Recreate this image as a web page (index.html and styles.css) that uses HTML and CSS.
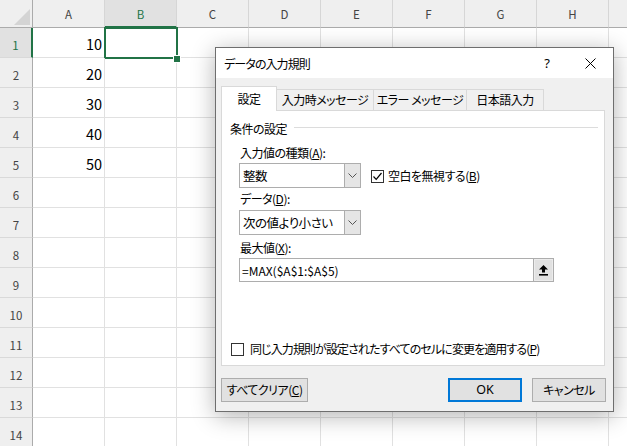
FILE: index.html
```html
<!DOCTYPE html>
<html lang="ja">
<head>
<meta charset="utf-8">
<title>データの入力規則</title>
<link rel="stylesheet" href="styles.css">
</head>
<body>
<div class="sheet">
  <div class="corner"><svg width="16" height="16" viewBox="0 0 16 16"><polygon points="0,16 16,0 16,16" fill="#d4d4d4"/></svg></div>
  <div class="hd">A</div><div class="hd sel">B</div><div class="hd">C</div><div class="hd">D</div><div class="hd">E</div><div class="hd">F</div><div class="hd">G</div><div class="hd">H</div><div class="hd last"></div>

  <div class="rh sel">1</div><div class="c num">10</div><div class="c active"><span class="selbox"></span><span class="handle"></span></div><div class="c"></div><div class="c"></div><div class="c"></div><div class="c"></div><div class="c"></div><div class="c"></div><div class="c last"></div>
  <div class="rh">2</div><div class="c num">20</div><div class="c"></div><div class="c"></div><div class="c"></div><div class="c"></div><div class="c"></div><div class="c"></div><div class="c"></div><div class="c last"></div>
  <div class="rh">3</div><div class="c num">30</div><div class="c"></div><div class="c"></div><div class="c"></div><div class="c"></div><div class="c"></div><div class="c"></div><div class="c"></div><div class="c last"></div>
  <div class="rh">4</div><div class="c num">40</div><div class="c"></div><div class="c"></div><div class="c"></div><div class="c"></div><div class="c"></div><div class="c"></div><div class="c"></div><div class="c last"></div>
  <div class="rh">5</div><div class="c num">50</div><div class="c"></div><div class="c"></div><div class="c"></div><div class="c"></div><div class="c"></div><div class="c"></div><div class="c"></div><div class="c last"></div>
  <div class="rh">6</div><div class="c"></div><div class="c"></div><div class="c"></div><div class="c"></div><div class="c"></div><div class="c"></div><div class="c"></div><div class="c"></div><div class="c last"></div>
  <div class="rh">7</div><div class="c"></div><div class="c"></div><div class="c"></div><div class="c"></div><div class="c"></div><div class="c"></div><div class="c"></div><div class="c"></div><div class="c last"></div>
  <div class="rh">8</div><div class="c"></div><div class="c"></div><div class="c"></div><div class="c"></div><div class="c"></div><div class="c"></div><div class="c"></div><div class="c"></div><div class="c last"></div>
  <div class="rh">9</div><div class="c"></div><div class="c"></div><div class="c"></div><div class="c"></div><div class="c"></div><div class="c"></div><div class="c"></div><div class="c"></div><div class="c last"></div>
  <div class="rh">10</div><div class="c"></div><div class="c"></div><div class="c"></div><div class="c"></div><div class="c"></div><div class="c"></div><div class="c"></div><div class="c"></div><div class="c last"></div>
  <div class="rh">11</div><div class="c"></div><div class="c"></div><div class="c"></div><div class="c"></div><div class="c"></div><div class="c"></div><div class="c"></div><div class="c"></div><div class="c last"></div>
  <div class="rh">12</div><div class="c"></div><div class="c"></div><div class="c"></div><div class="c"></div><div class="c"></div><div class="c"></div><div class="c"></div><div class="c"></div><div class="c last"></div>
  <div class="rh">13</div><div class="c"></div><div class="c"></div><div class="c"></div><div class="c"></div><div class="c"></div><div class="c"></div><div class="c"></div><div class="c"></div><div class="c last"></div>
  <div class="rh">14</div><div class="c"></div><div class="c"></div><div class="c"></div><div class="c"></div><div class="c"></div><div class="c"></div><div class="c"></div><div class="c"></div><div class="c last"></div>
</div>

<div class="dialog">
  <div class="titlebar">
    <span class="title">データの入力規則</span>
    <span class="help">?</span>
    <span class="close"><svg width="11" height="11" viewBox="0 0 11 11"><path d="M0.5 0.5 L10.5 10.5 M10.5 0.5 L0.5 10.5" stroke="#000" stroke-width="1" fill="none"/></svg></span>
  </div>
  <div class="dbody">
    <div class="tabs">
      <div class="tab active t1">設定</div>
      <div class="tab t2">入力時メッセージ</div>
      <div class="tab t3">エラー メッセージ</div>
      <div class="tab t4">日本語入力</div>
    </div>
    <div class="panel">
      <div class="group"><span class="glabel">条件の設定</span><span class="gline"></span></div>
      <div class="fields">
        <div class="label l1">入力値の種類(<u>A</u>):</div>
        <div class="row">
          <div class="combo"><span class="ctext">整数</span><span class="cbtn"><svg width="9" height="5" viewBox="0 0 9 5"><polyline points="0.5,0.5 4.5,4.5 8.5,0.5" fill="none" stroke="#555" stroke-width="1"/></svg></span></div>
          <div class="check cb1"><span class="box"><svg width="11" height="11" viewBox="0 0 11 11"><polyline points="1.5,5.5 4.2,8.3 9.5,2" fill="none" stroke="#000" stroke-width="1.2"/></svg></span><span>空白を無視する(<u>B</u>)</span></div>
        </div>
        <div class="label l2">データ(<u>D</u>):</div>
        <div class="combo"><span class="ctext">次の値より小さい</span><span class="cbtn"><svg width="9" height="5" viewBox="0 0 9 5"><polyline points="0.5,0.5 4.5,4.5 8.5,0.5" fill="none" stroke="#555" stroke-width="1"/></svg></span></div>
        <div class="label l3">最大値(<u>X</u>):</div>
        <div class="refedit"><span class="rtext">=MAX($A$1:$A$5)</span><span class="rbtn"><svg width="9" height="11" viewBox="0 0 9 11"><polygon points="4.5,0 9,4.5 6,4.5 6,7.5 3,7.5 3,4.5 0,4.5" fill="#000"/><rect x="0" y="9" width="9" height="1.6" fill="#000"/></svg></span></div>
      </div>
      <div class="check cb2"><span class="box"></span><span>同じ入力規則が設定されたすべてのセルに変更を適用する(<u>P</u>)</span></div>
    </div>
    <div class="buttons">
      <div class="btn clear">すべてクリア(<u>C</u>)</div>
      <div class="spacer"></div>
      <div class="btn ok">OK</div>
      <div class="btn cancel">キャンセル</div>
    </div>
  </div>
</div>
</body>
</html>
```

FILE: styles.css
```css
* { box-sizing: border-box; }
html, body { margin: 0; padding: 0; }
body {
  width: 627px;
  height: 446px;
  overflow: hidden;
  background: #fff;
  font-family: "Noto Sans CJK JP", "Noto Sans", sans-serif;
  position: relative;
}

/* spreadsheet */
.sheet {
  display: grid;
  grid-template-columns: 33px repeat(8, 72px) 1fr;
  grid-template-rows: 28px;
  grid-auto-rows: 30px;
}
.corner {
  background: #efefef;
  border-right: 1px solid #ababab;
  border-bottom: 1px solid #ababab;
  display: flex;
  align-items: flex-end;
  justify-content: flex-end;
  padding: 0 2px 2px 0;
}
.hd {
  background: #efefef;
  border-right: 1px solid #d6d6d6;
  border-bottom: 1px solid #ababab;
  font-size: 11.5px;
  color: #444;
  display: flex;
  align-items: center;
  justify-content: center;
  padding-top: 1px;
}
.hd.sel {
  background: #e1e1e1;
  color: #217346;
  border-bottom: 2px solid #217346;
}
.rh {
  background: #efefef;
  border-right: 1px solid #ababab;
  border-bottom: 1px solid #d9d9d9;
  font-size: 11.5px;
  color: #444;
  display: flex;
  align-items: center;
  justify-content: center;
  padding-top: 4px;
}
.rh.sel {
  background: #e1e1e1;
  color: #217346;
  border-right: 2px solid #217346;
}
.c {
  border-right: 1px solid #e1e1e1;
  border-bottom: 1px solid #e1e1e1;
  position: relative;
}
.c.last, .hd.last { border-right: none; }
.num {
  font-size: 14.5px;
  color: #000;
  display: flex;
  align-items: center;
  justify-content: flex-end;
  padding-right: 2px;
  padding-top: 1px;
}
.selbox {
  position: absolute;
  left: -1px;
  top: -1px;
  width: 74px;
  height: 32px;
  border: 2px solid #217346;
}
.handle {
  position: absolute;
  left: 68px;
  top: 27px;
  width: 8px;
  height: 8px;
  background: #217346;
  border: 1px solid #fff;
  z-index: 2;
}

/* dialog */
.dialog {
  position: absolute;
  left: 215px;
  top: 47px;
  width: 399px;
  height: 365px;
  border: 1px solid #6e6e6e;
  background: #f0f0f0;
  box-shadow: 0 4px 22px rgba(0, 0, 0, 0.3);
  display: flex;
  flex-direction: column;
  font-size: 12px;
  letter-spacing: -0.5px;
  font-feature-settings: "palt";
  color: #000;
  z-index: 3;
}
.titlebar {
  height: 30px;
  background: #fff;
  display: flex;
  align-items: center;
  padding-left: 8px;
  flex: none;
}
.title { font-size: 12px; letter-spacing: -0.9px; }
.help {
  margin-left: auto;
  margin-right: 5px;
  font-size: 13px;
  font-family: "Noto Sans", sans-serif;
  width: 20px;
  text-align: center;
  letter-spacing: 0;
}
.close {
  width: 46px;
  display: flex;
  justify-content: center;
  align-items: center;
  margin-left: 5px;
  margin-right: 0;
}
.close svg { display: block; }

.dbody {
  flex: 1;
  display: flex;
  flex-direction: column;
  padding: 8px 8px 9px 5px;
}
.tabs {
  display: flex;
  align-items: flex-end;
  height: 24px;
  position: relative;
  z-index: 1;
  flex: none;
}
.tab {
  height: 21px;
  border: 1px solid #d9d9d9;
  border-bottom: none;
  background: #f0f0f0;
  display: flex;
  align-items: center;
  justify-content: center;
  margin-left: -1px;
  line-height: 16px;
}
.tab.active {
  height: 25px;
  margin-bottom: -1px;
  background: #fff;
  margin-left: 0;
}
.t1 { width: 56px; }
.t2 { width: 98px; }
.t3 { width: 94px; }
.t4 { width: 78px; }

.panel {
  height: 256px;
  background: #fff;
  border: 1px solid #d9d9d9;
  display: flex;
  flex-direction: column;
  flex: none;
}
.group {
  display: flex;
  align-items: center;
  margin: 10px 6px 0 8px;
  height: 16px;
  line-height: 16px;
}
.gline {
  flex: 1;
  height: 1px;
  background: #dcdcdc;
  margin-left: 7px;
  margin-top: -3px;
}
.fields {
  margin-left: 17px;
  display: flex;
  flex-direction: column;
  align-items: flex-start;
}
.label {
  line-height: 16px;
  padding-left: 1px;
}
.l1 { margin-top: 8px; margin-bottom: 2px; }
.l2 { margin-top: 3px; margin-bottom: 3px; }
.l3 { margin-top: 5px; margin-bottom: 2px; }
.row {
  display: flex;
  align-items: center;
}
.combo {
  width: 122px;
  height: 25px;
  border: 1px solid #adadad;
  background: #fff;
  display: flex;
  align-items: stretch;
}
.ctext {
  flex: 1;
  display: flex;
  align-items: center;
  padding-left: 3px;
  font-size: 12.5px;
}
.cbtn {
  width: 16px;
  background: #e5e5e5;
  border-left: 1px solid #adadad;
  display: flex;
  align-items: center;
  justify-content: center;
}
.cbtn svg { display: block; }
.check {
  display: flex;
  align-items: center;
  line-height: 16px;
}
.box {
  width: 13px;
  height: 13px;
  border: 1px solid #333;
  background: #fff;
  display: flex;
  align-items: center;
  justify-content: center;
  margin-right: 4px;
}
.box svg { display: block; }
.cb1 { margin-left: 10px; margin-top: 1px; }
.refedit {
  width: 315px;
  height: 24px;
  border: 1px solid #adadad;
  background: #fff;
  display: flex;
  align-items: stretch;
}
.rtext {
  flex: 1;
  display: flex;
  align-items: center;
  padding-left: 2px;
  font-size: 12px;
  letter-spacing: 0;
}
.rbtn {
  width: 21px;
  background: #e1e1e1;
  border: 1px solid #adadad;
  margin: -1px -1px -1px 0;
  display: flex;
  align-items: center;
  justify-content: center;
  box-shadow: inset 0 0 0 1px #ececec;
}
.rbtn svg { display: block; }
.cb2 {
  margin-top: auto;
  margin-left: 9px;
  margin-bottom: 8px;
  letter-spacing: -0.9px;
}
.cb2 .box { margin-right: 6px; }

.buttons {
  display: flex;
  margin-top: 12px;
  flex: none;
}
.spacer { flex: 1; }
.btn {
  height: 24px;
  background: #e1e1e1;
  border: 1px solid #adadad;
  display: flex;
  align-items: center;
  justify-content: center;
  line-height: 16px;
}
.clear { width: 87px; }
.ok {
  width: 74px;
  border: 2px solid #0078d7;
  margin-right: 10px;
  font-family: "Noto Sans", sans-serif;
  font-size: 12.5px;
  letter-spacing: 0;
}
.cancel { width: 74px; margin-right: -1px; }
u { text-decoration: underline; text-underline-offset: 1px; }
```
